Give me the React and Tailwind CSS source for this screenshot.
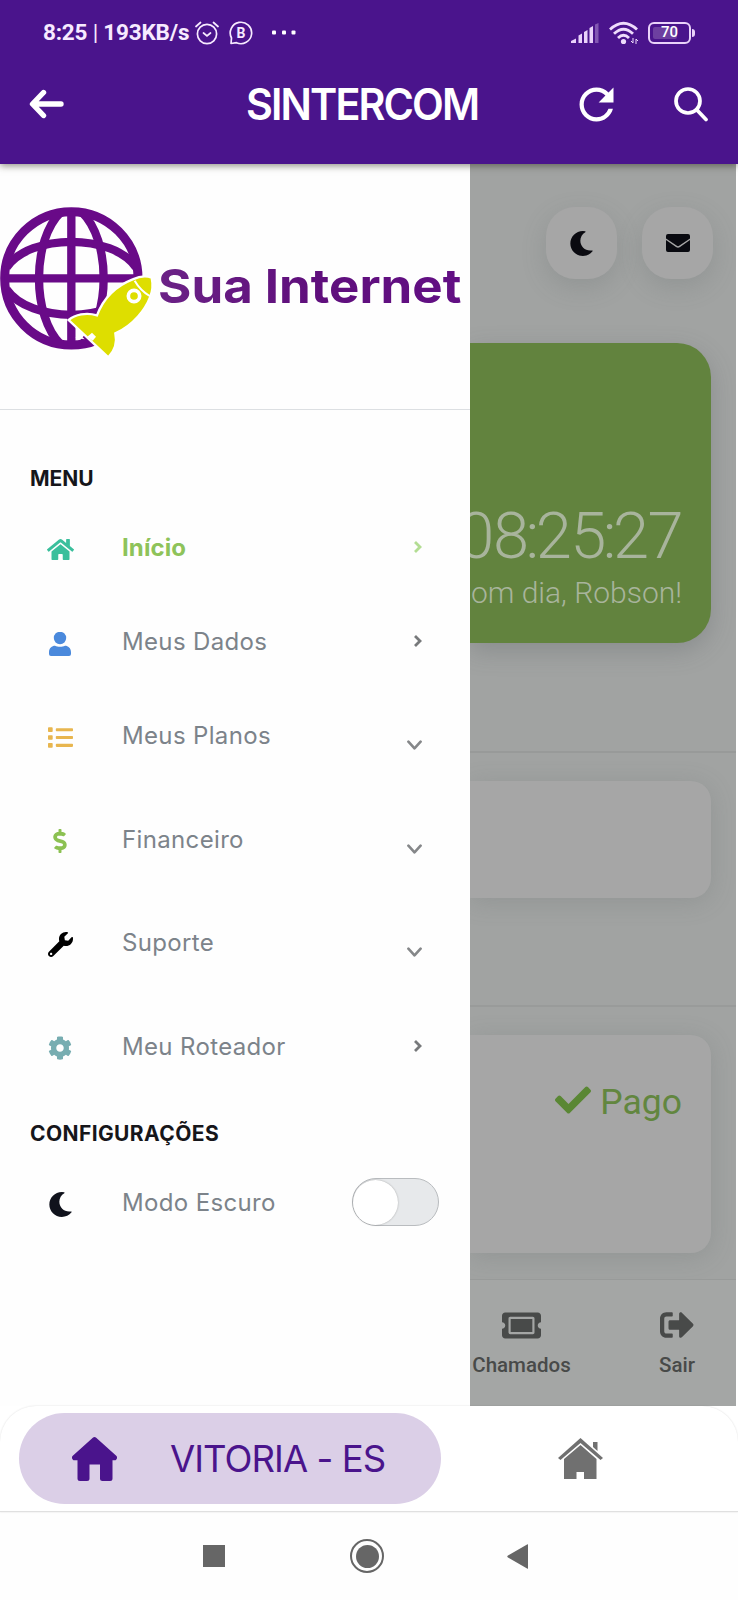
import React from "react";
import { FaHome, FaList, FaDollarSign, FaWrench, FaCog, FaMoon, FaCheck, FaTicketAlt, FaSignOutAlt } from "react-icons/fa";
import { MdRefresh } from "react-icons/md";

function StatusBar() {
  return (
    <div className="flex h-16 items-center pl-[43px] pr-[43px] pt-px text-[#f7eaff]">
      <span className="w-[147px] whitespace-nowrap font-['Roboto',sans-serif] text-[22.5px] font-bold leading-none tracking-[-0.2px]">
        8:25 <span className="font-normal">|</span> 193KB/s
      </span>
      <svg className="ml-[5px] h-6 w-6 shrink-0" viewBox="0 0 24 24" fill="none" stroke="currentColor" strokeWidth="1.7" strokeLinecap="round">
        <circle cx="12" cy="13" r="9.6" />
        <path d="M1 5.5 5.5 1.5M23 5.5 18.5 1.5M8.5 12l3.5 3 3.5-3" />
      </svg>
      <span className="relative ml-[10px] flex h-6 w-6 shrink-0 items-center justify-center">
        <svg className="absolute inset-0 h-6 w-6" viewBox="0 0 24 24" fill="none" stroke="currentColor" strokeWidth="1.7">
          <path d="M2 22.500 2.500 17A10.700 10.700 0 1 1 7.500 21.700Z" strokeLinejoin="round" />
        </svg>
        <span className="relative font-['Roboto',sans-serif] text-[14px] font-bold leading-none">B</span>
      </span>
      <svg className="ml-[19px] h-6 w-6" viewBox="0 0 24 24" fill="white">
        <rect x="0" y="9.500" width="4" height="4" rx="1" />
        <rect x="10" y="9.500" width="4" height="4" rx="1" />
        <rect x="19.500" y="9.500" width="4" height="4" rx="1" />
      </svg>
      <div className="ml-auto flex items-center gap-[10px]">
        <svg className="h-[22px] w-7" viewBox="0 0 28 22" fill="#ead3fa">
          <path d="M0 21v-2l5-2.500V21zM7.500 13.500l3.500-2V21H7.500zM13 10l3.500-2V21H13zM18.500 6 22 4V21h-3.500z" />
          <path d="M24 2.500 27.500 1V21H24z" opacity=".35" />
        </svg>
        <svg className="h-6 w-[29px]" viewBox="0 0 29 24" fill="none" stroke="#efdcfc" strokeWidth="2.8">
          <path d="M1 8.500Q14.500-4 28 8.500M5 12.800Q14.500 3.500 24 12.800M9 17Q14.500 11.500 20 17" />
          <circle cx="14.500" cy="20.500" r="2.600" fill="#efdcfc" stroke="none" />
          <path d="M24 17v5l-2-2M27 23v-5l2 2" strokeWidth="1" />
        </svg>
        <span className="relative flex h-[22px] w-[47px] items-center">
          <span className="relative flex h-[22px] w-[43px] items-center justify-center rounded-[6px] border-[2.5px] border-[#ead3fa]">
            <span className="absolute left-[3px] h-3 w-6 rounded-[2px] bg-[#6d3fa0]" />
            <span className="relative font-['Roboto',sans-serif] text-[15px] font-medium leading-none text-white">70</span>
          </span>
          <span className="ml-[1px] h-2 w-[3px] rounded-r bg-[#ead3fa]" />
        </span>
      </div>
    </div>
  );
}

function Header() {
  return (
    <header className="relative z-20 h-[164px] bg-[#4a148c] text-white shadow-[0_2px_7px_rgba(40,40,20,0.5)]">
      <StatusBar />
      <div className="flex h-20 items-center pl-[29px] pr-[29px]">
        <svg className="h-[30px] w-[35px]" viewBox="0 0 35 30" fill="none" stroke="currentColor" strokeWidth="5.400" strokeLinecap="round" strokeLinejoin="round">
          <path d="M14.500 3.500 3.500 15l11 11.500M4.500 15H32" />
        </svg>
        <h1 className="relative top-px ml-[182px] w-[232px] origin-left scale-x-[0.95] whitespace-nowrap font-['Inter',sans-serif] text-[43.500px] font-semibold leading-none tracking-[-2px]">
          SINTERCOM
        </h1>
        <MdRefresh className="ml-auto h-[51px] w-[51px]" />
        <svg className="ml-[52px] h-[35px] w-[35px] shrink-0" viewBox="0 0 35 35" fill="none" stroke="currentColor" strokeWidth="3.700" strokeLinecap="round">
          <circle cx="14" cy="14" r="12" />
          <path d="M22.500 22.500 32 32.500" />
        </svg>
      </div>
    </header>
  );
}

function Logo() {
  return (
    <svg className="mt-[26px] block h-[190px] w-[470px]" viewBox="0 0 1410 570">
      <defs>
        <linearGradient id="word" x1="0" y1="0" x2="1" y2="0">
          <stop offset="0" stopColor="#6b2286" />
          <stop offset=".5" stopColor="#5f0f7c" />
          <stop offset="1" stopColor="#620f84" />
        </linearGradient>
      </defs>
      <g fill="none" stroke="#690a88" strokeWidth="25">
        <circle cx="214" cy="265" r="200" strokeWidth="27" />
        <path d="M214 65V465M14 265H414" />
        <path d="M183 66C95 150 95 380 183 464M245 66C333 150 333 380 245 464" />
        <path d="M20 232C90 130 338 130 408 232M20 298C90 400 338 400 408 298" />
      </g>
      <path
        d="M398 268C420 258 440 257 455 263C461 290 457 306 450 322C437 356 402 405 346 430C352 458 345 482 325 502L206 390C225 374 258 366 291 376C310 325 347 288 398 268Z"
        fill="#dede00" stroke="white" strokeWidth="7"
      />
      <path d="M404 272Q420 300 449 318" fill="none" stroke="white" strokeWidth="6" />
      <path d="M226 442L240 434L254 448L244 446Z" fill="white" />
      <path d="M262 440l14-12 12 12-10 12z" fill="white" />
      <circle cx="402" cy="318" r="17" fill="none" stroke="white" strokeWidth="11" />
      <text x="474" y="340" fill="url(#word)" fontFamily="'Inter', sans-serif" fontSize="141" fontWeight="700" textLength="910" lengthAdjust="spacingAndGlyphs">
        Sua Internet
      </text>
    </svg>
  );
}

function UserIcon(props) {
  return (
    <svg viewBox="0 0 24 24" fill="currentColor" {...props}>
      <circle cx="12" cy="6" r="6.200" />
      <path d="M1 20.500C1 16 4 13.800 7 13.800c1.500.8 3 1 5 1s3.500-.2 5-1c3 0 6 2.200 6 6.700V22a2 2 0 0 1-2 2H3a2 2 0 0 1-2-2z" />
    </svg>
  );
}

function Chevron({ down, className }) {
  return down ? (
    <svg className="relative top-[9px] ml-auto mr-12 h-[10px] w-[15px]" viewBox="0 0 16 10" fill="none" stroke="#858789" strokeWidth="2.800" strokeLinecap="round" strokeLinejoin="round">
      <path d="m1.500 1.500 6.500 7 6.500-7" />
    </svg>
  ) : (
    <svg className={`relative -top-px ml-auto mr-12 h-3 w-2 ${className || "text-[#77797b]"}`} viewBox="0 0 8 12" fill="none" stroke="currentColor" strokeWidth="2.800">
      <path d="m1 1 5 5-5 5" />
    </svg>
  );
}

function MenuItem({ icon: Icon, iconClass, label, className, labelClass, children }) {
  return (
    <div className={`flex h-12 items-center pl-[46px] ${className}`}>
      <span className="flex w-7 shrink-0 justify-center pt-[2px]">
        <Icon className={iconClass} />
      </span>
      <span className={`ml-12 whitespace-nowrap font-['Inter',sans-serif] text-[24px] leading-none ${labelClass || "font-normal tracking-[0.350px] text-[#7c838a]"}`}>
        {label}
      </span>
      {children}
    </div>
  );
}

function Sidebar() {
  return (
    <aside className="relative z-10 h-[1242px] w-[470px] shrink-0 bg-[#fefefe]">
      <div className="h-[246px] overflow-hidden border-b border-[#dcdfe2]">
        <Logo />
      </div>
      <h2 className="mt-[58px] pl-[30px] font-['Inter',sans-serif] text-[21px] font-bold leading-[21px] text-[#16161a]">MENU</h2>
      <nav className="pt-[35px]">
        <MenuItem icon={FaHome} iconClass="h-[27px] w-[27px] text-[#3abf9c]" label="Início" labelClass="font-bold text-[#8ec35a] tracking-[0.1px]">
          <Chevron className="text-[#b3dd93]" />
        </MenuItem>
        <MenuItem className="mt-[46px]" icon={UserIcon} iconClass="relative top-px h-6 w-6 text-[#4a89dc]" label="Meus Dados"><Chevron /></MenuItem>
        <MenuItem className="mt-[46px]" icon={FaList} iconClass="h-[25px] w-[25px] text-[#e8b64f]" label="Meus Planos"><Chevron down /></MenuItem>
        <MenuItem className="mt-[56px]" icon={FaDollarSign} iconClass="h-6 w-6 text-[#8cc152]" label="Financeiro"><Chevron down /></MenuItem>
        <MenuItem className="mt-[55px]" icon={FaWrench} iconClass="h-[25px] w-[25px] text-black" label="Suporte"><Chevron down /></MenuItem>
        <MenuItem className="mt-[56px]" icon={FaCog} iconClass="h-6 w-6 text-[#77adb1]" label="Meu Roteador"><Chevron /></MenuItem>
      </nav>
      <h2 className="mt-[52px] pl-[30px] font-['Inter',sans-serif] text-[21px] font-bold leading-[21px] tracking-[0.4px] text-[#16161a]">CONFIGURAÇÕES</h2>
      <MenuItem className="mt-[35px]" icon={FaMoon} iconClass="h-[25px] w-[25px] text-[#10121c]" label="Modo Escuro">
        <span className="relative -top-px ml-auto mr-[31px] flex h-12 w-[87px] items-center rounded-full border border-[#b9bcbf] bg-[#e7e9eb]">
          <span className="h-[45px] w-[45px] rounded-full bg-white shadow-[0_0_2px_rgba(0,0,0,0.3)]" />
        </span>
      </MenuItem>
    </aside>
  );
}

function Dashboard() {
  return (
    <section className="flex h-[1242px] w-[266px] flex-col bg-[#a1a3a2] font-['Roboto',sans-serif]">
      <div className="flex justify-end gap-[25px] pr-[23px] pt-[43px]">
        <span className="flex h-[72px] w-[71px] items-center justify-center rounded-[29px] bg-[#a6a6a6] shadow-[0_8px_24px_rgba(90,100,98,0.22)]">
          <FaMoon className="h-[25px] w-[25px] text-[#0a0a10]" />
        </span>
        <span className="flex h-[72px] w-[71px] items-center justify-center rounded-[29px] bg-[#a6a6a6] shadow-[0_8px_24px_rgba(90,100,98,0.22)]">
          <svg className="h-[18px] w-6" viewBox="0 0 24 18" fill="#090a10">
            <path d="M2 0H22Q24 0 24 2V4.500L13.500 11.500Q12 12.800 10.500 11.500L0 4.500V2Q0 0 2 0Z" />
            <path d="M0 6 10 13Q12 14.500 14 13L24 6V16Q24 18 22 18H2Q0 18 0 16Z" />
          </svg>
        </span>
      </div>
      <div className="mr-[25px] mt-[64px] flex h-[300px] flex-col items-end justify-end rounded-r-[34px] bg-[#62833e] pb-[32px] pr-[29px] font-light text-[#a8b49c] shadow-[0_8px_24px_rgba(80,85,90,0.28)]">
        <p className="mb-[6px] whitespace-nowrap text-[65px] leading-[65px] tracking-[-1.500px]">
          08<span className="mx-[-2px]">:</span>25<span className="mx-[-2px]">:</span>27
        </p>
        <p className="whitespace-nowrap text-[30px] leading-9">Bom dia, Robson!</p>
      </div>
      <div className="mt-[108px] h-[2px] bg-[#989a99]" />
      <div className="mr-[25px] mt-7 h-[117px] rounded-r-[20px] bg-[#a6a6a6] shadow-[0_4px_24px_rgba(90,100,98,0.22)]" />
      <div className="mt-[107px] h-[2px] bg-[#999b9a]" />
      <div className="mr-[25px] mt-7 flex h-[218px] items-start justify-end gap-[9px] rounded-r-[20px] bg-[#a6a6a6] pr-[29px] pt-[47px] text-[#62863f] shadow-[0_4px_24px_rgba(90,100,98,0.22)]">
        <FaCheck className="h-9 w-9 text-[#5a8734]" />
        <span className="text-[35.500px] leading-10">Pago</span>
      </div>
      <div className="relative mt-[26px] flex flex-1 justify-between border-t border-[#989a99] bg-[#a4a6a5] pr-[41px] text-[20.500px] font-medium leading-none text-[#484a49]">
        <div className="flex w-[103px] flex-col items-center">
          <FaTicketAlt className="mt-[26px] h-[39px] w-[39px]" />
          <span className="mt-[10px]">Chamados</span>
        </div>
        <div className="flex flex-col items-center">
          <FaSignOutAlt className="mt-[28px] h-[34px] w-[34px]" />
          <span className="mt-[13px]">Sair</span>
        </div>
      </div>
    </section>
  );
}

function BottomBar() {
  return (
    <div className="relative z-20 flex h-[106px] items-center rounded-t-[36px] border-b border-[#e0e0e0] bg-white pl-[19px] shadow-[0_0_2px_rgba(0,0,0,0.14)]">
      <div className="flex h-[91px] w-[422px] items-center rounded-full bg-[#dbcfe7] pl-[53px] text-[#4a148c]">
        <svg className="h-11 w-[45px]" viewBox="0 0 45 44" fill="currentColor">
          <path d="M20.800.8Q22.500-.6 24.200.8L44.500 19Q46 21.500 43.500 23.300H40.500V41.500Q40.500 44 38 44H30.500Q28 44 28 41.500V27.500H17.500V41.500Q17.500 44 15 44H8Q5.500 44 5.500 41.500V23.300H1.500Q-1 21.500.5 19Z" />
        </svg>
        <span className="relative top-px ml-[53px] whitespace-nowrap font-['Inter',sans-serif] text-[36.500px] font-normal leading-none tracking-[-0.950px]">VITORIA - ES</span>
      </div>
      <svg className="ml-[117px] h-[41px] w-[45px]" viewBox="0 0 45 41" fill="#707070">
        <path d="M22.500 0 45 20 42.500 22 22.500 5 2.500 22 0 20ZM35 4H39.500V13L35 9Z" />
        <path d="M22.500 7 38.500 21V41H26V34H18.500V41H6V21Z" />
      </svg>
    </div>
  );
}

function SystemNav() {
  return (
    <div className="flex h-[88px] items-center bg-[#fefefe] pl-[203px]">
      <span className="h-[22px] w-[22px] bg-[#666]" />
      <span className="ml-[125px] flex h-[34px] w-[34px] items-center justify-center rounded-full border-[2.500px] border-[#666]">
        <span className="h-[23px] w-[23px] rounded-full bg-[#666]" />
      </span>
      <svg className="ml-[123px] h-[25px] w-[22px]" viewBox="0 0 22 25" fill="#666">
        <path d="M1 11.500 20.500.3Q21 0 21 .8V24.200Q21 25 20.500 24.700L1 13.500Q-.5 12.500 1 11.500Z" />
      </svg>
    </div>
  );
}

export default function App() {
  return (
    <div className="flex h-[1600px] w-[738px] flex-col overflow-hidden bg-white">
      <Header />
      <main className="flex h-[1242px] shrink-0 overflow-hidden">
        <Sidebar />
        <Dashboard />
      </main>
      <BottomBar />
      <SystemNav />
    </div>
  );
}
